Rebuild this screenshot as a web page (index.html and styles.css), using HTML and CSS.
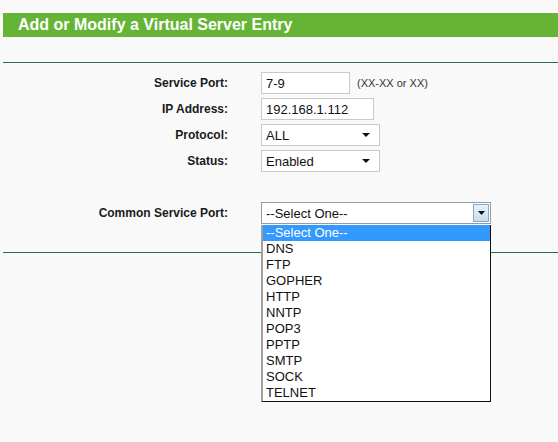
FILE: index.html
```html
<!DOCTYPE html>
<html>
<head>
<meta charset="utf-8">
<link rel="stylesheet" href="styles.css">
</head>
<body>
<div class="page">
  <div class="title">Add or Modify a Virtual Server Entry</div>
  <div class="rule top"></div>
  <div class="form">
    <div class="label">Service Port:</div>
    <div class="field"><div class="input w-port">7-9</div><span class="hint">(XX-XX or XX)</span></div>
    <div class="label">IP Address:</div>
    <div class="field"><div class="input w-ip">192.168.1.112</div></div>
    <div class="label">Protocol:</div>
    <div class="field"><div class="select w-sel"><span>ALL</span><svg class="arr" width="8" height="4" viewBox="0 0 8 4"><path d="M0 0H8L4 4Z" fill="#111"/></svg></div></div>
    <div class="label">Status:</div>
    <div class="field"><div class="select w-sel"><span>Enabled</span><svg class="arr" width="8" height="4" viewBox="0 0 8 4"><path d="M0 0H8L4 4Z" fill="#111"/></svg></div></div>
    <div class="label common">Common Service Port:</div>
    <div class="field common"><div class="select w-common open"><span>--Select One--</span><div class="btn"><svg width="7" height="4" viewBox="0 0 7 4"><path d="M0 0H7L3.5 4Z" fill="#111"/></svg></div></div></div>
  </div>
  <div class="rule bottom"></div>
  <ul class="list">
    <li class="sel">--Select One--</li>
    <li>DNS</li>
    <li>FTP</li>
    <li>GOPHER</li>
    <li>HTTP</li>
    <li>NNTP</li>
    <li>POP3</li>
    <li>PPTP</li>
    <li>SMTP</li>
    <li>SOCK</li>
    <li>TELNET</li>
  </ul>
</div>
</body>
</html>
```
FILE: styles.css
```css
html, body {
  margin: 0;
  padding: 0;
  background: #f9f9f9;
}
body {
  font-family: "Liberation Sans", Arial, sans-serif;
  width: 558px;
  height: 442px;
  overflow: hidden;
}
.page {
  position: relative;
  padding-top: 13px;
}
.title {
  margin-left: 3px;
  height: 24px;
  line-height: 24px;
  background: #66b436;
  color: #fff;
  font-weight: bold;
  font-size: 16px;
  padding-left: 15px;
}
.rule {
  margin-left: 3px;
  border-top: 1px solid #2f6a55;
}
.rule.top {
  margin-top: 25px;
}
.rule.bottom {
  margin-top: 28px;
}
.form {
  display: grid;
  grid-template-columns: 228px auto;
  column-gap: 33px;
  row-gap: 4px;
  margin-top: 9px;
  align-items: center;
}
.label {
  text-align: right;
  font-size: 12px;
  font-weight: bold;
  color: #1a1a1a;
}
.label.common, .field.common {
  margin-top: 26px;
}
.field {
  display: flex;
  align-items: center;
  height: 22px;
}
.input, .select {
  box-sizing: border-box;
  height: 22px;
  background: #fff;
  border: 1px solid #c9c9c9;
  font-size: 13px;
  color: #111;
  padding-left: 4px;
  display: flex;
  align-items: center;
}
.w-port { width: 89px; }
.w-ip { width: 113px; }
.w-sel { width: 119px; justify-content: space-between; padding-right: 9px; }
.w-common {
  width: 230px;
  justify-content: space-between;
  border-color: #9a9a9a;
  padding-right: 1px;
}
.hint {
  margin-left: 7px;
  font-size: 11px;
  color: #333;
}
.btn {
  box-sizing: border-box;
  width: 16px;
  height: 18px;
  border: 1px solid #8fa8bb;
  background: linear-gradient(#e6f1fb, #c7ddf1);
  display: flex;
  align-items: center;
  justify-content: center;
}
.list {
  position: absolute;
  top: 225px;
  left: 261px;
  width: 230px;
  box-sizing: border-box;
  margin: 0;
  padding: 0;
  list-style: none;
  background: #fff;
  border: 1px solid #111;
  border-left: 2px solid #a0a0a0;
  border-top: 0;
  font-size: 13px;
  color: #111;
}
.list li {
  height: 16px;
  line-height: 16px;
  padding-left: 3px;
}
.list li.sel {
  background: #3399ff;
  color: #fff;
}
```
